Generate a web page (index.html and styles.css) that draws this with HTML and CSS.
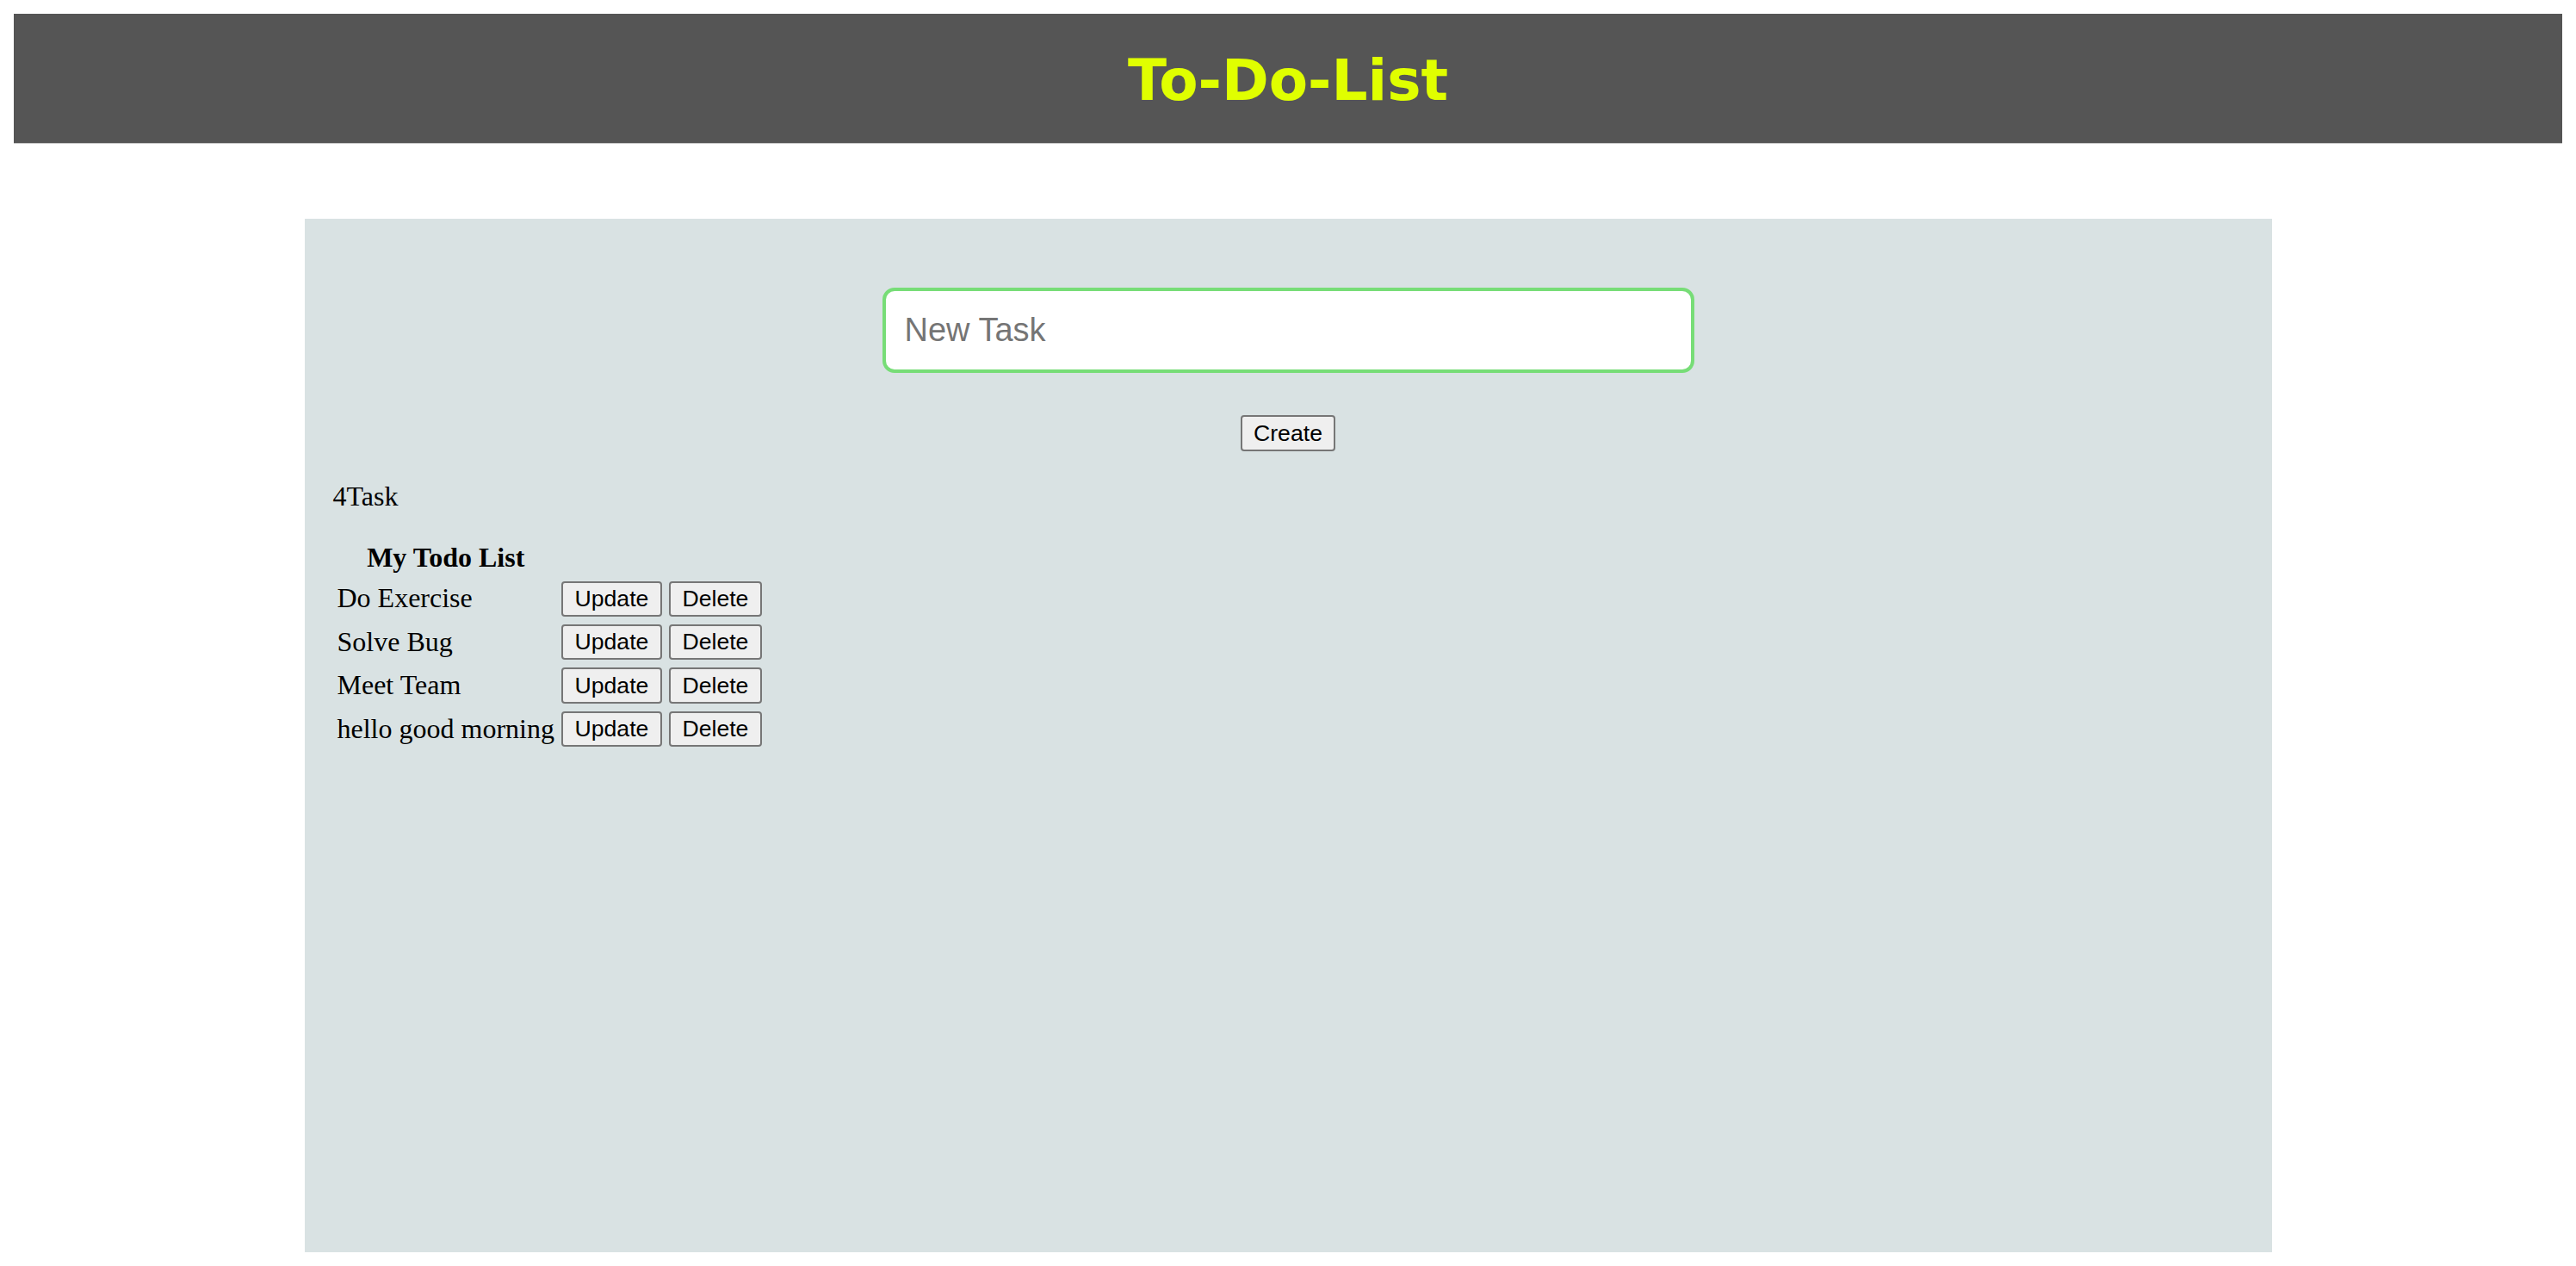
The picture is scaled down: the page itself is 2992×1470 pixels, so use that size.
FILE: index.html
```html
<!DOCTYPE html>
<html lang="en">
<head>
<meta charset="utf-8">
<title>To-Do-List</title>
<link rel="stylesheet" href="styles.css">
</head>
<body>
  <header class="topbar">
    <h1 class="title">To-Do-List</h1>
  </header>
  <main class="board">
    <input class="task-input" type="text" placeholder="New Task">
    <button class="btn create-btn" type="button">Create</button>
    <div class="count">4Task</div>
    <table class="todo-table">
      <thead>
        <tr><th>My Todo List</th><th></th><th></th></tr>
      </thead>
      <tbody>
        <tr><td>Do Exercise</td><td><button class="btn" type="button">Update</button></td><td><button class="btn" type="button">Delete</button></td></tr>
        <tr><td>Solve Bug</td><td><button class="btn" type="button">Update</button></td><td><button class="btn" type="button">Delete</button></td></tr>
        <tr><td>Meet Team</td><td><button class="btn" type="button">Update</button></td><td><button class="btn" type="button">Delete</button></td></tr>
        <tr><td>hello good morning</td><td><button class="btn" type="button">Update</button></td><td><button class="btn" type="button">Delete</button></td></tr>
      </tbody>
    </table>
  </main>
</body>
</html>
```

FILE: styles.css
```css
html, body {
  background: #ffffff;
}

body {
  margin: 16px;
  font-family: "Liberation Serif", "Times New Roman", serif;
  color: #000000;
}

.topbar {
  height: 150px;
  background: #555555;
  display: flex;
  align-items: center;
  justify-content: center;
  box-shadow: 0 1px 0 #c9c9c9;
}

.title {
  margin: 0;
  font-family: "DejaVu Sans", Verdana, sans-serif;
  font-weight: bold;
  font-size: 66px;
  line-height: 1;
  color: #e0ff00;
  position: relative;
  top: 3px;
}

.board {
  width: 2285px;
  height: 1200px;
  margin: 88px auto 0;
  box-sizing: border-box;
  padding: 80px 33px 0;
  background: #d9e2e3;
  display: flex;
  flex-direction: column;
  align-items: flex-start;
}

.task-input {
  align-self: center;
  width: 943px;
  height: 99px;
  box-sizing: border-box;
  border: 4px solid #77dd77;
  border-radius: 14px;
  padding: 0 22px;
  font-family: "Liberation Sans", Arial, sans-serif;
  font-size: 38px;
  background: #ffffff;
  outline: none;
}

.task-input::placeholder {
  color: #757575;
}

.btn {
  height: 42px;
  box-sizing: border-box;
  padding: 0 12px;
  border: 2px solid #767676;
  border-radius: 4px;
  background: #efefef;
  color: #000000;
  font-family: "Liberation Sans", Arial, sans-serif;
  font-size: 26.67px;
  line-height: 1;
  margin: 0;
  vertical-align: middle;
}

.create-btn {
  align-self: center;
  margin-top: 49px;
  width: 110px;
}

.count {
  margin-top: 34px;
  font-size: 32px;
  line-height: 36.8px;
}

.todo-table {
  margin-top: 28px;
  margin-left: -1px;
  border-spacing: 4px;
  font-size: 32px;
  line-height: 36.8px;
}

.todo-table .btn {
  height: 41.5px;
  padding: 0 13.5px;
}

.todo-table th,
.todo-table td {
  padding: 2px;
  vertical-align: middle;
}

.todo-table th {
  font-weight: bold;
  text-align: center;
}

.todo-table td {
  text-align: left;
  white-space: nowrap;
}
```
